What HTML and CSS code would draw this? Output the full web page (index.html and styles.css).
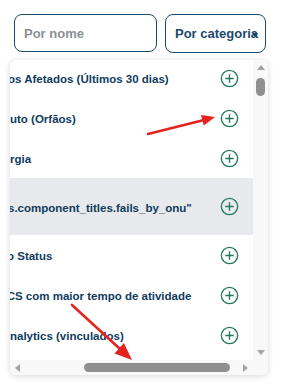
FILE: index.html
```html
<!DOCTYPE html>
<html lang="pt">
<head>
<meta charset="utf-8">
<link rel="stylesheet" href="styles.css">
</head>
<body>
<div class="page">
  <div class="filters">
    <input class="field" type="text" placeholder="Por nome">
    <div class="select">
      <span class="select-text">Por categoria</span>
      <span class="caret"></span>
    </div>
  </div>

  <div class="card">
    <div class="viewport">
      <ul class="list">
        <li class="row"><span class="label">os Afetados (Últimos 30 dias)</span><svg class="add" viewBox="0 0 20 20"><circle cx="10" cy="10" r="8.6"/><path d="M10 5.6V14.4M5.6 10H14.4"/></svg></li>
        <li class="row"><span class="label">uto (Orfãos)</span><svg class="add" viewBox="0 0 20 20"><circle cx="10" cy="10" r="8.6"/><path d="M10 5.6V14.4M5.6 10H14.4"/></svg></li>
        <li class="row"><span class="label">rgia</span><svg class="add" viewBox="0 0 20 20"><circle cx="10" cy="10" r="8.6"/><path d="M10 5.6V14.4M5.6 10H14.4"/></svg></li>
        <li class="row row-active"><span class="label">s.component_titles.fails_by_onu"</span><svg class="add" viewBox="0 0 20 20"><circle cx="10" cy="10" r="8.6"/><path d="M10 5.6V14.4M5.6 10H14.4"/></svg></li>
        <li class="row"><span class="label">o Status</span><svg class="add" viewBox="0 0 20 20"><circle cx="10" cy="10" r="8.6"/><path d="M10 5.6V14.4M5.6 10H14.4"/></svg></li>
        <li class="row"><span class="label">CS com maior tempo de atividade</span><svg class="add" viewBox="0 0 20 20"><circle cx="10" cy="10" r="8.6"/><path d="M10 5.6V14.4M5.6 10H14.4"/></svg></li>
        <li class="row"><span class="label">nalytics (vinculados)</span><svg class="add" viewBox="0 0 20 20"><circle cx="10" cy="10" r="8.6"/><path d="M10 5.6V14.4M5.6 10H14.4"/></svg></li>
        <li class="row"><span class="label">Tráfego</span><svg class="add" viewBox="0 0 20 20"><circle cx="10" cy="10" r="8.6"/><path d="M10 5.6V14.4M5.6 10H14.4"/></svg></li>
      </ul>
    </div>
    <div class="vbar">
      <span class="btn"><span class="tri tri-up"></span></span>
      <span class="vtrack"><span class="vthumb"></span></span>
      <span class="btn"><span class="tri tri-down"></span></span>
    </div>
    <div class="hbar">
      <span class="btn"><span class="tri tri-left"></span></span>
      <span class="htrack"><span class="hthumb"></span></span>
      <span class="btn"><span class="tri tri-right"></span></span>
    </div>
    <div class="corner"></div>
  </div>

  <svg class="annot" viewBox="0 0 281 389" width="281" height="389">
    <line x1="148" y1="134" x2="203" y2="120.2"/>
    <polygon points="215,117 203.8,125.5 201,114.9"/>
    <line x1="72" y1="305" x2="120" y2="349"/>
    <polygon points="132,360 114.5,353.4 123.9,343"/>
  </svg>
</div>
</body>
</html>
```
FILE: styles.css
```css
* { box-sizing: border-box; }
html, body { margin: 0; padding: 0; background: #fff; }
body { font-family: "Liberation Sans", Arial, sans-serif; }

.page { position: relative; width: 281px; height: 389px; overflow: hidden; }

.filters {
  display: flex;
  align-items: flex-start;
  gap: 8px;
  padding: 14px 0 0 14px;
}

.field {
  width: 143px;
  height: 38px;
  margin: 0;
  padding: 0 0 0 9px;
  border: 1px solid #1b4a6c;
  border-radius: 8px;
  font-family: inherit;
  font-size: 13px;
  font-weight: bold;
  color: #1b4a6c;
  outline: none;
}
.field::placeholder { color: #8b9096; }

.select {
  position: relative;
  width: 101px;
  height: 39px;
  display: flex;
  align-items: center;
  padding-left: 9px;
  border: 1px solid #1b4a6c;
  border-radius: 8px;
  overflow: hidden;
}
.select-text {
  font-size: 13px;
  font-weight: bold;
  color: #1b4a6c;
  white-space: nowrap;
}
.caret {
  position: absolute;
  left: 86px;
  top: 18px;
  width: 0;
  height: 0;
  border-left: 3px solid transparent;
  border-right: 3px solid transparent;
  border-top: 4px solid #1b3f5c;
}

.card {
  margin: 7px 0 0 10px;
  width: 258px;
  display: grid;
  grid-template-columns: 243px 15px;
  grid-template-rows: 300px 15px;
  background: #fff;
  border-radius: 6px;
  box-shadow: 0 1px 6px rgba(0, 0, 0, 0.16);
  overflow: hidden;
}

.viewport { overflow: hidden; }

.list {
  list-style: none;
  margin: -2px 0 0;
  padding: 0;
}
.row {
  height: 40px;
  display: flex;
  align-items: center;
  justify-content: space-between;
  padding-right: 14px;
}
.row-active { height: 57px; background: #e7e9ec; }

.label {
  display: block;
  flex: 1;
  min-width: 0;
  overflow: hidden;
  white-space: nowrap;
  font-size: 11.5px;
  font-weight: bold;
  color: #103c5e;
  padding-top: 2px;
}
.row:nth-child(1) .label { text-indent: -2px; }
.row:nth-child(4) .label { text-indent: -2px; }
.row:nth-child(5) .label { text-indent: -3px; }
.row:nth-child(6) .label { text-indent: -3.3px; }

.add {
  flex: none;
  width: 19px;
  height: 19px;
  fill: none;
  stroke: #23795d;
  stroke-width: 1.4;
}

.vbar, .hbar { background: #f8f8f8; display: flex; }
.vbar { flex-direction: column; }
.corner { background: #f8f8f8; }

.btn {
  flex: none;
  width: 15px;
  height: 15px;
  display: flex;
  align-items: center;
  justify-content: center;
}
.tri { width: 0; height: 0; }
.tri-up { border-left: 4px solid transparent; border-right: 4px solid transparent; border-bottom: 5px solid #a3a3a3; }
.tri-down { border-left: 4px solid transparent; border-right: 4px solid transparent; border-top: 5px solid #a3a3a3; }
.tri-left { border-top: 4px solid transparent; border-bottom: 4px solid transparent; border-right: 5px solid #a3a3a3; }
.tri-right { border-top: 4px solid transparent; border-bottom: 4px solid transparent; border-left: 5px solid #a3a3a3; }

.vtrack { flex: 1; display: flex; flex-direction: column; align-items: center; padding-top: 3px; }
.vthumb { width: 9px; height: 18px; border-radius: 5px; background: #8f8f8f; }

.htrack { flex: 1; display: flex; align-items: center; padding-left: 59px; }
.hthumb { width: 146px; height: 9px; border-radius: 5px; background: #8f8f8f; }

.annot {
  position: absolute;
  top: 0;
  left: 0;
  pointer-events: none;
}
.annot line { stroke: #e3241f; stroke-width: 2.6; stroke-linecap: round; }
.annot polygon { fill: #e3241f; }
```
